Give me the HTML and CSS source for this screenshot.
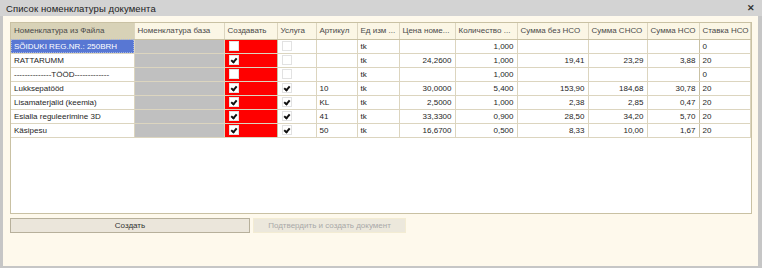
FILE: index.html
```html
<!DOCTYPE html>
<html lang="ru">
<head>
  <meta charset="UTF-8" />
  <title>Список номенклатуры документа</title>
  <link rel="stylesheet" href="styles.css">
</head>
<body>
  <div class="window">
    <div class="titlebar">
      <span class="title">Список номенклатуры документа</span>
      <span class="close">&#x2715;</span>
    </div>

    <div class="content">
      <div class="grid">
        <table>
          <colgroup>
            <col style="width:123px"><col style="width:90px"><col style="width:53px"><col style="width:39px">
            <col style="width:41px"><col style="width:42px"><col style="width:56px"><col style="width:62px">
            <col style="width:71px"><col style="width:59px"><col style="width:52px"><col>
          </colgroup>
          <thead>
            <tr>
              <th class="sorted">Номенклатура из Файла</th>
              <th>Номенклатура база</th>
              <th>Создавать</th>
              <th>Услуга</th>
              <th>Артикул</th>
              <th>Ед изм ...</th>
              <th>Цена номе...</th>
              <th>Количество ...</th>
              <th>Сумма без НСО</th>
              <th>Сумма СНСО</th>
              <th>Сумма НСО</th>
              <th>Ставка НСО</th>
            </tr>
          </thead>
          <tbody>
            <tr>
              <td class="current">SÕIDUKI REG.NR.: 250BRH</td>
              <td class="base"></td>
              <td class="create"><span class="box"></span></td>
              <td class="flag"><span class="box"></span></td>
              <td></td><td>tk</td><td class="num"></td><td class="num">1,000</td>
              <td class="num"></td><td class="num"></td><td class="num"></td><td>0</td>
            </tr>
            <tr>
              <td>RATTARUMM</td>
              <td class="base"></td>
              <td class="create"><span class="box checked"></span></td>
              <td class="flag"><span class="box"></span></td>
              <td></td><td>tk</td><td class="num">24,2600</td><td class="num">1,000</td>
              <td class="num">19,41</td><td class="num">23,29</td><td class="num">3,88</td><td>20</td>
            </tr>
            <tr>
              <td>--------------TÖÖD-------------</td>
              <td class="base"></td>
              <td class="create"><span class="box"></span></td>
              <td class="flag"><span class="box"></span></td>
              <td></td><td>tk</td><td class="num"></td><td class="num">1,000</td>
              <td class="num"></td><td class="num"></td><td class="num"></td><td>0</td>
            </tr>
            <tr>
              <td>Lukksepatööd</td>
              <td class="base"></td>
              <td class="create"><span class="box checked"></span></td>
              <td class="flag"><span class="box checked"></span></td>
              <td>10</td><td>tk</td><td class="num">30,0000</td><td class="num">5,400</td>
              <td class="num">153,90</td><td class="num">184,68</td><td class="num">30,78</td><td>20</td>
            </tr>
            <tr>
              <td>Lisamaterjalid (keemia)</td>
              <td class="base"></td>
              <td class="create"><span class="box checked"></span></td>
              <td class="flag"><span class="box checked"></span></td>
              <td>KL</td><td>tk</td><td class="num">2,5000</td><td class="num">1,000</td>
              <td class="num">2,38</td><td class="num">2,85</td><td class="num">0,47</td><td>20</td>
            </tr>
            <tr>
              <td>Esialla reguleerimine 3D</td>
              <td class="base"></td>
              <td class="create"><span class="box checked"></span></td>
              <td class="flag"><span class="box checked"></span></td>
              <td>41</td><td>tk</td><td class="num">33,3300</td><td class="num">0,900</td>
              <td class="num">28,50</td><td class="num">34,20</td><td class="num">5,70</td><td>20</td>
            </tr>
            <tr>
              <td>Käsipesu</td>
              <td class="base"></td>
              <td class="create"><span class="box checked"></span></td>
              <td class="flag"><span class="box checked"></span></td>
              <td>50</td><td>tk</td><td class="num">16,6700</td><td class="num">0,500</td>
              <td class="num">8,33</td><td class="num">10,00</td><td class="num">1,67</td><td>20</td>
            </tr>
          </tbody>
        </table>
      </div>

      <div class="actions">
        <button class="btn btn-create">Создать</button>
        <button class="btn btn-confirm" disabled>Подтвердить и создать документ</button>
      </div>
    </div>
  </div>
</body>
</html>
```

FILE: styles.css
```css
:root {
  --frame: #c6c6c6;
  --cream: #fef9ec;
  --line: #dcd5bf;
  --line-dark: #c9c1a3;
  --text: #1e1e1e;
}

* {
  box-sizing: border-box;
  margin: 0;
  padding: 0;
}

body {
  font-family: "Liberation Sans", Arial, sans-serif;
  font-size: 8px;
  color: var(--text);
  background: var(--frame);
}

.window {
  width: 762px;
  height: 268px;
  display: flex;
  flex-direction: column;
  background: var(--cream);
  border-left: 3px solid var(--frame);
  border-right: 4px solid var(--frame);
  border-bottom: 2px solid var(--frame);
}

.titlebar {
  height: 16px;
  flex: none;
  display: flex;
  align-items: center;
  justify-content: space-between;
  background: #d3d3d3;
  margin: 0 -4px 0 -3px;
  padding: 0 7px 0 6px;
}

.title {
  font-size: 9.5px;
  color: #222;
  letter-spacing: 0.1px;
}

.close {
  font-size: 9px;
  font-weight: bold;
  color: #333;
}

.content {
  flex: 1;
  display: flex;
  flex-direction: column;
  padding: 6px 6px 0 7px;
}

.grid {
  height: 192px;
  background: #fff;
  border: 1px solid var(--line-dark);
  overflow: hidden;
}

table {
  width: 100%;
  table-layout: fixed;
  border-collapse: collapse;
}

th {
  height: 16px;
  padding: 0 3px;
  font-weight: normal;
  text-align: left;
  color: #4a4a4a;
  background: #fbf6e5;
  border-right: 1px solid var(--line);
  border-bottom: 1px solid var(--line-dark);
  white-space: nowrap;
  overflow: hidden;
}

th.sorted {
  background: #d8d2b7;
}

td {
  height: 14px;
  padding: 0 3px;
  border-right: 1px solid var(--line);
  border-bottom: 1px solid var(--line);
  white-space: nowrap;
  overflow: hidden;
}

td.num {
  text-align: right;
}

td.current {
  background: #5877d3;
  color: #fff;
  outline: 1px dotted #9fb2ea;
  outline-offset: -1px;
}

td.base {
  background: #c0c0c0;
}

td.create {
  background: #ff0000;
  border-right-color: var(--line-dark);
}

td.create, td.flag {
  padding: 0 4px;
}

.box {
  display: block;
  width: 10px;
  height: 10px;
  background: #fff;
  border: 1px solid #e2e2e2;
  position: relative;
}

.box.checked::after {
  content: "";
  position: absolute;
  left: 2px;
  top: 1px;
  width: 2px;
  height: 4px;
  border: solid #111;
  border-width: 0 2px 2px 0;
  transform: rotate(40deg);
}

td:nth-child(11) {
  border-right-color: var(--line-dark);
}

.actions {
  display: flex;
  gap: 3px;
  margin-top: 4px;
}

.btn {
  height: 15px;
  font-family: inherit;
  font-size: 8px;
  border-radius: 0;
}

.btn-create {
  width: 240px;
  background: #ebe6db;
  color: #333;
  border: 1px solid #b7b09b;
}

.btn-confirm {
  width: 153px;
  background: #ece8dc;
  color: #a9a9a9;
  border: 1px solid #f3ecd3;
}
```
